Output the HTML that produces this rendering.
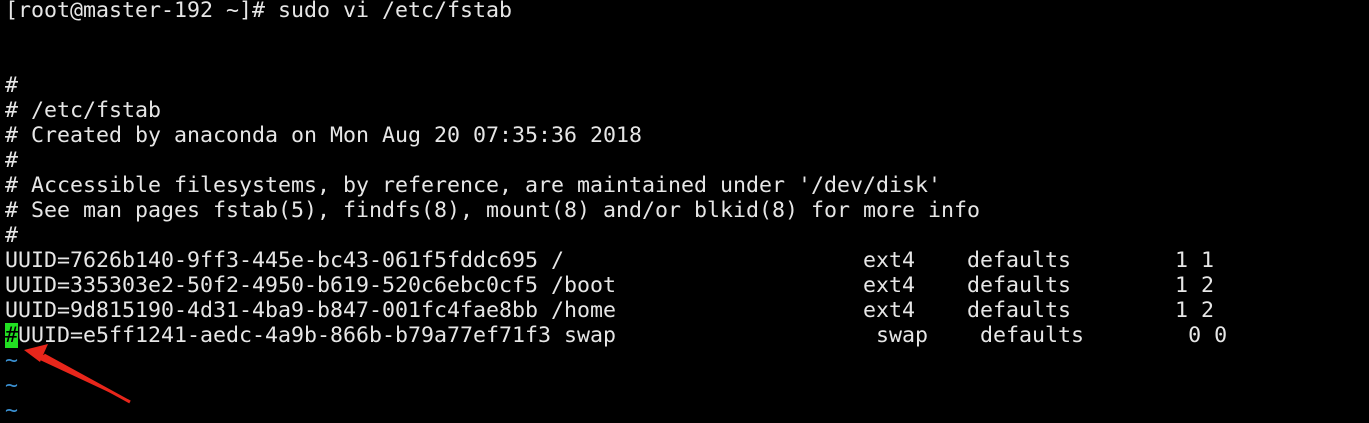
<!DOCTYPE html>
<html><head><meta charset="utf-8"><style>
html,body{margin:0;padding:0;background:#000;width:1369px;height:418px;overflow:hidden}
pre{position:absolute;left:5px;top:-2px;margin:0;font-family:"DejaVu Sans Mono","Liberation Mono",monospace;font-size:21.6px;line-height:25px;color:#e6e6e6;letter-spacing:0}
.c{background:#22e022;color:#000;display:inline-block;height:25px;vertical-align:top}
.t{color:#3a8fd0}
svg{position:absolute;left:0;top:0}
</style></head><body>
<pre>[root@master-192 ~]# sudo vi /etc/fstab


#
# /etc/fstab
# Created by anaconda on Mon Aug 20 07:35:36 2018
#
# Accessible filesystems, by reference, are maintained under '/dev/disk'
# See man pages fstab(5), findfs(8), mount(8) and/or blkid(8) for more info
#
UUID=7626b140-9ff3-445e-bc43-061f5fddc695 /                       ext4    defaults        1 1
UUID=335303e2-50f2-4950-b619-520c6ebc0cf5 /boot                   ext4    defaults        1 2
UUID=9d815190-4d31-4ba9-b847-001fc4fae8bb /home                   ext4    defaults        1 2
<span class="c">#</span>UUID=e5ff1241-aedc-4a9b-866b-b79a77ef71f3 swap                    swap    defaults        0 0
<span class="t">~</span>
<span class="t">~</span>
<span class="t">~</span></pre>
<svg width="1369" height="418"><path d="M130 402 L40 360 L42 354 Z" fill="#e8261b"/><path d="M24 350 L48 344 L40 362 Z" fill="#e8261b"/><path d="M130 402 L44 355" stroke="#e8261b" stroke-width="3" fill="none"/></svg>
</body></html>
